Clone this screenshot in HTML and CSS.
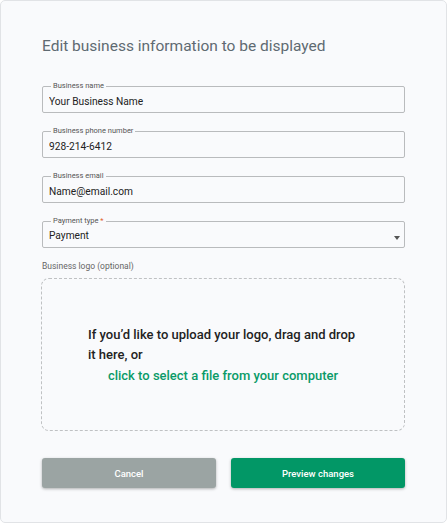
FILE: index.html
```html
<!DOCTYPE html>
<html lang="en">
<head>
    <meta charset="UTF-8">
    <meta name="viewport" content="width=device-width, initial-scale=1.0">
    <title>Edit business information</title>
    <link rel="stylesheet" href="styles.css">
</head>
<body>

<div class="card">
    <h2 class="title">Edit business information to be displayed</h2>

    <form class="form">
        <fieldset class="field">
            <legend>Business name</legend>
            <input type="text" value="Your Business Name">
        </fieldset>

        <fieldset class="field">
            <legend>Business phone number</legend>
            <input type="text" value="928-214-6412">
        </fieldset>

        <fieldset class="field">
            <legend>Business email</legend>
            <input type="text" value="Name@email.com">
        </fieldset>

        <fieldset class="field select">
            <legend>Payment type <span class="req">*</span></legend>
            <div class="select-value">
                <span>Payment</span>
                <span class="arrow"></span>
            </div>
        </fieldset>

        <div class="logo-label">Business logo (optional)</div>
        <div class="dropzone">
            <p class="drop-text">If you’d like to upload your logo, drag and drop it here, or</p>
            <a class="drop-link" href="#">click to select a file from your computer</a>
        </div>

        <div class="actions">
            <button type="button" class="btn btn-cancel">Cancel</button>
            <button type="button" class="btn btn-primary">Preview changes</button>
        </div>
    </form>
</div>

</body>
</html>
```

FILE: styles.css
```css
* {
    box-sizing: border-box;
}
body {
    margin: 0;
    font-family: Roboto, 'Liberation Sans', sans-serif;
    color: #222;
    background-color: #fff;
}
.card {
    height: 523px;
    background-color: #f9fafc;
    border: 1px solid #e1e3e6;
    border-radius: 5px;
    padding: 35px 41px 0 41px;
}
.title {
    margin: 0 0 25px;
    font-size: 15.5px;
    line-height: 20px;
    font-weight: 400;
    color: #5f6a72;
}
.form {
    display: flex;
    flex-direction: column;
}
.field {
    margin: 0 0 13px;
    padding: 0 6px 3px;
    border: 1px solid #b9bbbd;
    border-radius: 2px;
    min-width: 0;
}
.field legend {
    padding: 0 2px;
    margin-left: 2px;
    font-size: 7.5px;
    line-height: 10px;
    color: #555;
}
.req {
    color: #e05a2b;
}
.field input {
    display: block;
    width: 100%;
    border: none;
    background: transparent;
    padding: 2px 0 0;
    margin: 0;
    font-family: inherit;
    font-size: 10.2px;
    line-height: 16px;
    height: 18px;
    color: #222;
    outline: none;
}
.select-value {
    display: flex;
    justify-content: space-between;
    align-items: center;
    padding-top: 2px;
    font-size: 10.2px;
    line-height: 16px;
}
.arrow {
    width: 0;
    height: 0;
    margin-right: -2px;
    margin-top: 3px;
    border-left: 3.5px solid transparent;
    border-right: 3.5px solid transparent;
    border-top: 4px solid #555;
}
.logo-label {
    margin-top: -1px;
    font-size: 8.5px;
    line-height: 12px;
    color: #666;
}
.dropzone {
    margin: 6px 0 0 -1px;
    height: 153px;
    border: 1px dashed #bfc1c3;
    border-radius: 8px;
    display: flex;
    flex-direction: column;
    align-items: center;
    justify-content: center;
    padding-top: 1px;
}
.drop-text {
    margin: 0;
    width: 270px;
    font-size: 13px;
    line-height: 20px;
    font-weight: 500;
    color: #222;
}
.drop-link {
    font-size: 13px;
    line-height: 21px;
    font-weight: 500;
    color: #0a9a68;
    text-decoration: none;
}
.actions {
    display: flex;
    gap: 15px;
    margin-top: 27px;
}
.btn {
    flex: 1;
    height: 30px;
    border: none;
    border-radius: 3px;
    font-family: inherit;
    font-size: 9.5px;
    font-weight: 500;
    color: #fff;
    box-shadow: 0 1px 3px rgba(0,0,0,0.3);
    cursor: pointer;
}
.btn-cancel {
    background-color: #9ba4a3;
}
.btn-primary {
    background-color: #029766;
}
```
